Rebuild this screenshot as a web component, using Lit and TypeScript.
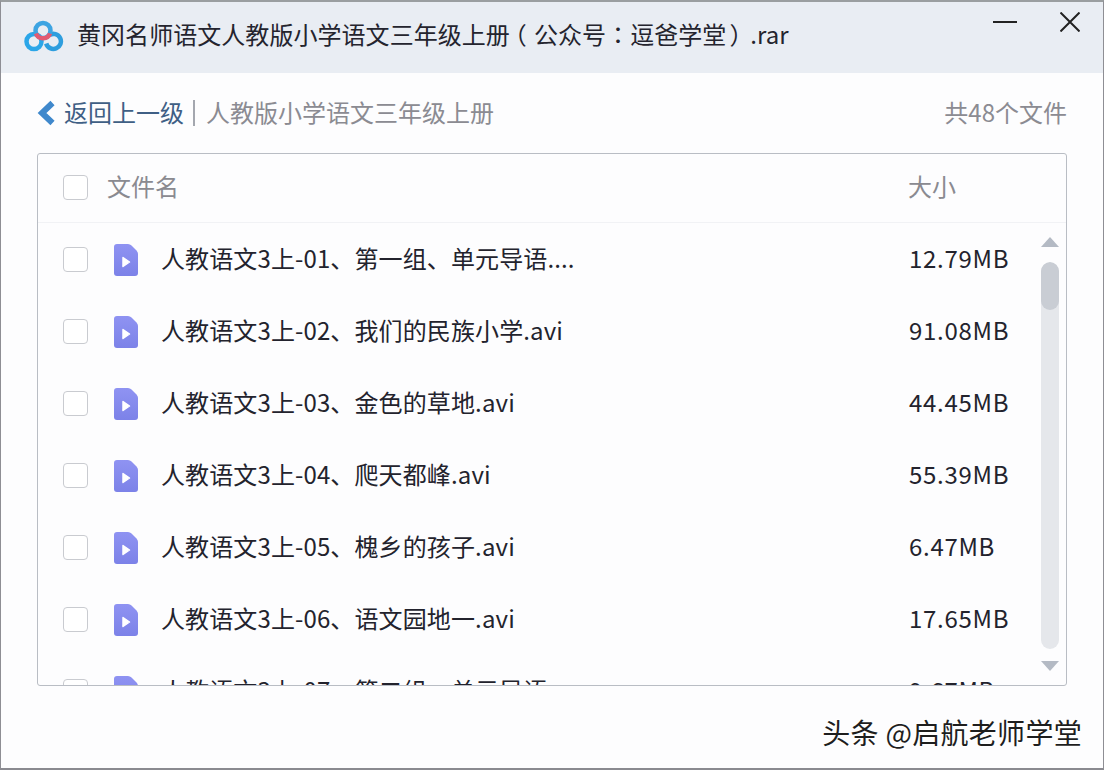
import { LitElement, html, css, svg } from "lit";
import { customElement } from "lit/decorators.js";

const files = [
  ["人教语文3上-01、第一组、单元导语....", "12.79MB"],
  ["人教语文3上-02、我们的民族小学.avi", "91.08MB"],
  ["人教语文3上-03、金色的草地.avi", "44.45MB"],
  ["人教语文3上-04、爬天都峰.avi", "55.39MB"],
  ["人教语文3上-05、槐乡的孩子.avi", "6.47MB"],
  ["人教语文3上-06、语文园地一.avi", "17.65MB"],
  ["人教语文3上-07、第二组、单元导语....", "9.67MB"],
];

@customElement("app-root")
export class AppRoot extends LitElement {
  static styles = css`
    :host {
      display: block;
      width: 1104px;
      height: 770px;
      font-family: "Noto Sans CJK SC", "Noto Sans", sans-serif;
      color: #2b2b35;
    }
    .win {
      position: relative;
      box-sizing: border-box;
      width: 1104px;
      height: 770px;
      background: #fdfdfe;
      border: 1px solid #8e8e94;
      border-top: 2px solid #9a9ea0;
      border-bottom: 2px solid #8a8a90;
      display: flex;
      flex-direction: column;
      overflow: hidden;
    }
    .title {
      box-sizing: border-box;
      height: 71px;
      flex: none;
      background: #e9edf3;
      display: flex;
      align-items: center;
      padding: 0 23px 4px 23px;
      gap: 13px;
    }
    .title h1 {
      margin: 0 0 4px;
      flex: 1;
      font-size: 24px;
      font-weight: 400;
      color: #24242e;
      white-space: nowrap;
      line-height: 32px;
      letter-spacing: 0.05px;
    }
    .paren {
      display: inline-block;
      box-sizing: border-box;
      width: 24px;
      padding-right: 4px;
      text-align: center;
      font-feature-settings: "palt";
    }
    .colon { font-family: "Noto Sans CJK TC", sans-serif; }
    .wctl {
      align-self: flex-start;
      margin-top: 10px;
      display: flex;
      align-items: center;
      gap: 43px;
    }
    .wctl svg { display: block; }
    .nav {
      height: 80px;
      flex: none;
      display: flex;
      align-items: center;
      padding: 0 36px 0 35px;
      font-size: 24px;
    }
    .nav span { margin-bottom: 4px; }
    .back { color: #3f5f85; margin-left: 9px; }
    .sep { width: 2px; height: 26px; background: #a4a7af; margin: 0 11px 0 9px; }
    .path { color: #8b8b92; flex: 1; }
    .count { color: #8b8b92; }
    .box {
      flex: 1;
      margin: 0 36px 0 36px;
      border: 1px solid #b9bdc4;
      border-radius: 3px;
      display: flex;
      flex-direction: column;
      overflow: hidden;
      max-height: 533px;
      min-height: 533px;
      box-sizing: border-box;
    }
    .head {
      flex: none;
      height: 69px;
      box-sizing: border-box;
      border-bottom: 1px solid #f1f2f5;
      display: flex;
      align-items: center;
      padding-left: 25px;
      color: #8a8a90;
      font-size: 24px;
    }
    .head .cb { margin-bottom: 2px; }
    .head span:not(.cb) { margin-bottom: 6px; }
    .cb {
      flex: none;
      box-sizing: border-box;
      width: 25px;
      height: 25px;
      border: 1px solid #c9cbd0;
      border-radius: 4px;
      background: #fff;
    }
    .hname { margin-left: 19px; flex: none; width: 801px; }
    .body { flex: 1; display: flex; min-height: 0; position: relative; }
    .rows { flex: 1; }
    .row {
      height: 72px;
      display: flex;
      align-items: center;
      padding-left: 25px;
      font-size: 24px;
      color: #23232d;
    }
    .ficon { margin: 2px 0 0 26px; flex: none; display: block; }
    .name {
      margin-left: 23px;
      width: 748px;
      flex: none;
      white-space: nowrap;
      line-height: 34px;
      margin-top: -2px;
      letter-spacing: 0.12px;
    }
    .size { flex: none; letter-spacing: 0.7px; line-height: 34px; margin-top: -2px; }
    .sbar {
      position: absolute;
      right: 7px;
      top: 0;
      bottom: 0;
      width: 18px;
      display: flex;
      flex-direction: column;
      align-items: center;
    }
    .up { margin-top: 14px; display: block; }
    .down { display: block; margin-top: 12px; }
    .track {
      margin-top: 15px;
      width: 18px;
      height: 387px;
      flex: none;
      border-radius: 9px;
      background: #e5e7eb;
      overflow: hidden;
    }
    .thumb { height: 48px; background: #c9cdd4; border-radius: 9px; }
    .mark {
      position: absolute;
      right: 21px;
      bottom: 18px;
      font-size: 28px;
      line-height: 36px;
      letter-spacing: 0.3px;
      color: #1e1e1e;
      white-space: nowrap;
      text-shadow: 1px 1px 0 #fff, -1px -1px 0 #fff, 1px -1px 0 #fff, -1px 1px 0 #fff;
    }
  `;

  private logo() {
    return svg`<svg width="40" height="40" viewBox="0 0 40 40">
      <circle cx="10" cy="25.5" r="7.5" fill="none" stroke="#2ba6e8" stroke-width="4.5"/>
      <path d="M25.5 19 A7.5 7.5 0 1 1 22.2 27.5" fill="none" stroke="#2e9ede" stroke-width="4.5"/>
      <circle cx="19" cy="14.5" r="7.5" fill="none" stroke="#3da4e2" stroke-width="4.5"/>
      <path d="M12 17.5 A7.5 7.5 0 0 0 26 17.5" fill="none" stroke="#e25a72" stroke-width="4.5"/>
    </svg>`;
  }

  render() {
    return html`<div class="win">
      <header class="title">
        ${this.logo()}
        <h1>黄冈名师语文人教版小学语文三年级上册<span class="paren">（</span>公众号<span class="colon">：</span>逗爸学堂<span class="paren">）</span>.rar</h1>
        <div class="wctl">
          <svg width="24" height="4" viewBox="0 0 24 4"><path d="M0 2H24" stroke="#222" stroke-width="2"/></svg>
          <svg width="20" height="20" viewBox="0 0 20 20"><path d="M.5 .5L19.5 19.5M19.5 .5L.5 19.5" stroke="#222" stroke-width="2"/></svg>
        </div>
      </header>
      <nav class="nav">
        <svg width="19" height="26" viewBox="0 0 19 26"><path d="M16.5 3L6 13L16.5 23" fill="none" stroke="#3f88cc" stroke-width="6"/></svg>
        <span class="back">返回上一级</span><i class="sep"></i>
        <span class="path">人教版小学语文三年级上册</span>
        <span class="count">共48个文件</span>
      </nav>
      <section class="box">
        <div class="head"><span class="cb"></span><span class="hname">文件名</span><span>大小</span></div>
        <div class="body">
          <div class="rows">
            ${files.map(
              ([n, s]) => html`<div class="row">
                <span class="cb"></span>
                <svg class="ficon" width="24" height="32" viewBox="0 0 24 32">
                  <defs><linearGradient id="fg" x1="0" y1="0" x2="0" y2="1"><stop offset="0" stop-color="#8f93f2"/><stop offset="1" stop-color="#7c82e8"/></linearGradient></defs>
                  <path d="M3 0H14Q16 0 17.5 1.5L22.5 6.5Q24 8 24 10V29a3 3 0 0 1-3 3H3a3 3 0 0 1-3-3V3a3 3 0 0 1 3-3Z" fill="url(#fg)"/>
                  <path d="M9 13.5L15.5 18L9 22.5Z" fill="#fff" stroke="#fff" stroke-width="1.5" stroke-linejoin="round"/>
                </svg>
                <span class="name">${n}</span><span class="size">${s}</span>
              </div>`
            )}
          </div>
          <div class="sbar">
            <svg class="up" width="18" height="10" viewBox="0 0 18 10"><path d="M9 0L18 10H0Z" fill="#b4bac4"/></svg>
            <div class="track"><div class="thumb"></div></div>
            <svg class="down" width="18" height="10" viewBox="0 0 18 10"><path d="M9 10L18 0H0Z" fill="#b4bac4"/></svg>
          </div>
        </div>
      </section>
      <div class="mark">头条 @启航老师学堂</div>
    </div>`;
  }
}
